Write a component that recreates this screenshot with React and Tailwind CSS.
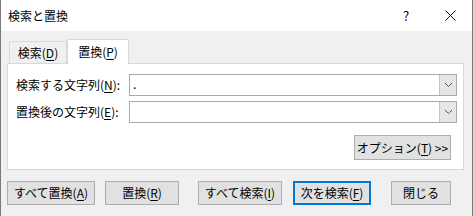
import React from 'react';

const font = { fontFamily: '"Noto Sans CJK JP", "Noto Sans", sans-serif' };

function U({ children }) {
  return <span className="underline underline-offset-2">{children}</span>;
}

function Btn({ className = '', focus = false, children }) {
  const border = focus ? 'border-2 border-[#0078d7]' : 'border border-[#adadad]';
  return (
    <div className={`flex h-[24px] items-center justify-center bg-[#e1e1e1] text-[12px] text-black ${border} ${className}`}>
      {children}
    </div>
  );
}

function Combo({ value }) {
  return (
    <div className="flex h-[22px] w-[328px] border border-[#a9a9a9] bg-white">
      <div className="flex-1 pl-[3px] text-[12px] leading-[18px]">{value}</div>
      <div className="flex w-[17px] items-center justify-center border-l border-[#c4c4c4] bg-[#e6e6e6]">
        <svg width="9" height="6" viewBox="0 0 9 6">
          <path d="M1 1 L4.5 4.5 L8 1" fill="none" stroke="#555" strokeWidth="1" />
        </svg>
      </div>
    </div>
  );
}

export default function App() {
  return (
    <div className="flex h-[216px] w-[473px] flex-col border-x border-[#7a7a7a] bg-[#f0f0f0] text-black" style={font}>
      {/* title bar */}
      <div className="flex h-[31px] items-center bg-white">
        <span className="pl-[7px] text-[12px]">検索と置換</span>
        <div className="ml-auto flex items-center pr-[2px]">
          <div className="w-[40px] text-center text-[13px]">?</div>
          <div className="ml-[4px] flex w-[40px] justify-center">
            <svg width="11" height="11" viewBox="0 0 11 11">
              <path d="M0.5 0.5 L10.5 10.5 M10.5 0.5 L0.5 10.5" stroke="#111" strokeWidth="1" />
            </svg>
          </div>
        </div>
      </div>

      {/* tabs */}
      <div className="ml-[6px] mt-[8px] flex h-[24px] items-end">
        <div className="ml-[2px] flex h-[22px] w-[58px] items-center justify-center border border-b-0 border-[#d9d9d9] text-[12px]">
          検索(<U>D</U>)
        </div>
        <div className="relative -mb-px flex h-[25px] w-[62px] items-center justify-center border border-b-0 border-[#d9d9d9] bg-white text-[12px]">
          置換(<U>P</U>)
        </div>
      </div>

      {/* panel */}
      <div className="ml-[6px] flex h-[107px] w-[457px] flex-col border border-[#d9d9d9] bg-white pl-[8px] pt-[10px]">
        <div className="flex items-center">
          <span className="w-[113px] text-[12px]">検索する文字列(<U>N</U>):</span>
          <Combo value="." />
        </div>
        <div className="mt-[5px] flex items-center">
          <span className="w-[113px] text-[12px]">置換後の文字列(<U>E</U>):</span>
          <Combo value="" />
        </div>
        <div className="mt-[12px] flex justify-end pr-[12px]">
          <Btn className="h-[25px] w-[97px]">
            オプション(<U>T</U>)&nbsp;&gt;&gt;
          </Btn>
        </div>
      </div>

      {/* bottom buttons */}
      <div className="ml-[6px] mt-[11px] flex">
        <Btn className="w-[88px]">すべて置換(<U>A</U>)</Btn>
        <Btn className="ml-[10px] w-[74px]">置換(<U>R</U>)</Btn>
        <Btn className="ml-[19px] w-[84px]">すべて検索(<U>I</U>)</Btn>
        <Btn focus className="ml-[11px] w-[78px]">次を検索(<U>F</U>)</Btn>
        <Btn className="ml-[20px] w-[60px]">閉じる</Btn>
      </div>
    </div>
  );
}
